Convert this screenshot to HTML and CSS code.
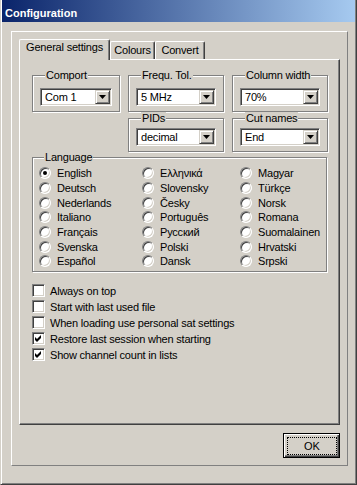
FILE: index.html
```html
<!DOCTYPE html>
<html lang="en">
<head>
    <meta charset="UTF-8">
    <meta name="viewport" content="width=device-width, initial-scale=1.0">
    <title>Configuration</title>
    <link rel="stylesheet" href="styles.css">
</head>
<body>
<div class="window">
    <div class="titlebar">Configuration</div>

    <div class="frame">
        <div class="tabs">
            <div class="tab active">General settings</div>
            <div class="tab tab-colours">Colours</div>
            <div class="tab tab-convert">Convert</div>
        </div>

        <div class="panel">
            <div class="top-groups">
                <div class="group">
                    <div class="group-label">Comport</div>
                    <div class="combo">
                        <span class="combo-text">Com 1</span>
                        <span class="combo-btn"><svg width="7" height="4" viewBox="0 0 7 4"><path d="M0 0h7L3.5 4z"/></svg></span>
                    </div>
                </div>
                <div class="group">
                    <div class="group-label">Frequ. Tol.</div>
                    <div class="combo">
                        <span class="combo-text">5 MHz</span>
                        <span class="combo-btn"><svg width="7" height="4" viewBox="0 0 7 4"><path d="M0 0h7L3.5 4z"/></svg></span>
                    </div>
                </div>
                <div class="group">
                    <div class="group-label">Column width</div>
                    <div class="combo">
                        <span class="combo-text">70%</span>
                        <span class="combo-btn"><svg width="7" height="4" viewBox="0 0 7 4"><path d="M0 0h7L3.5 4z"/></svg></span>
                    </div>
                </div>
                <div class="group small col-2">
                    <div class="group-label">PIDs</div>
                    <div class="combo">
                        <span class="combo-text">decimal</span>
                        <span class="combo-btn"><svg width="7" height="4" viewBox="0 0 7 4"><path d="M0 0h7L3.5 4z"/></svg></span>
                    </div>
                </div>
                <div class="group small">
                    <div class="group-label">Cut names</div>
                    <div class="combo">
                        <span class="combo-text">End</span>
                        <span class="combo-btn"><svg width="7" height="4" viewBox="0 0 7 4"><path d="M0 0h7L3.5 4z"/></svg></span>
                    </div>
                </div>
            </div>

            <div class="group language">
                <div class="group-label">Language</div>
                <div class="radios">
                    <div class="radio"><span class="dot checked"></span>English</div>
                    <div class="radio"><span class="dot"></span>Deutsch</div>
                    <div class="radio"><span class="dot"></span>Nederlands</div>
                    <div class="radio"><span class="dot"></span>Italiano</div>
                    <div class="radio"><span class="dot"></span>Français</div>
                    <div class="radio"><span class="dot"></span>Svenska</div>
                    <div class="radio"><span class="dot"></span>Español</div>
                    <div class="radio"><span class="dot"></span>Ελληνικά</div>
                    <div class="radio"><span class="dot"></span>Slovensky</div>
                    <div class="radio"><span class="dot"></span>Česky</div>
                    <div class="radio"><span class="dot"></span>Português</div>
                    <div class="radio"><span class="dot"></span>Русский</div>
                    <div class="radio"><span class="dot"></span>Polski</div>
                    <div class="radio"><span class="dot"></span>Dansk</div>
                    <div class="radio"><span class="dot"></span>Magyar</div>
                    <div class="radio"><span class="dot"></span>Türkçe</div>
                    <div class="radio"><span class="dot"></span>Norsk</div>
                    <div class="radio"><span class="dot"></span>Romana</div>
                    <div class="radio"><span class="dot"></span>Suomalainen</div>
                    <div class="radio"><span class="dot"></span>Hrvatski</div>
                    <div class="radio"><span class="dot"></span>Srpski</div>
                </div>
            </div>

            <div class="checks">
                <div class="check"><span class="box"></span>Always on top</div>
                <div class="check"><span class="box"></span>Start with last used file</div>
                <div class="check"><span class="box"></span>When loading use personal sat settings</div>
                <div class="check"><span class="box"><svg width="7" height="7" viewBox="0 0 7 7"><path d="M0 2L2 4L6 0V3L2 7L0 5Z"/></svg></span>Restore last session when starting</div>
                <div class="check"><span class="box"><svg width="7" height="7" viewBox="0 0 7 7"><path d="M0 2L2 4L6 0V3L2 7L0 5Z"/></svg></span>Show channel count in lists</div>
            </div>
        </div>

        <div class="actions">
            <button class="btn-ok"><span class="focus">OK</span></button>
        </div>
    </div>
</div>
</body>
</html>
```

FILE: styles.css
```css
body {
    margin: 0;
    background: #D4D0C8;
}

.window {
    width: 357px;
    height: 485px;
    box-sizing: border-box;
    display: flex;
    flex-direction: column;
    background: #D4D0C8;
    border-left: 1px solid #D4D0C8;
    border-right: 1px solid #404040;
    border-bottom: 1px solid #404040;
    box-shadow: inset 1px 0 #fff, inset -1px -1px #808080;
    font-family: "Liberation Sans", Arial, sans-serif;
    font-size: 11px;
    letter-spacing: -0.2px;
    color: #000;
}

.titlebar {
    height: 22px;
    box-sizing: border-box;
    margin: 0 1px;
    padding: 3px 0 0 3px;
    display: flex;
    align-items: center;
    background: linear-gradient(to right, #0A246A, #A6CAF0);
    color: #fff;
    font-weight: bold;
    letter-spacing: 0;
}

/* outer frame round the tab control */
.frame {
    height: 435px;
    box-sizing: border-box;
    margin: 9px 8px 0 10px;
    padding: 7px;
    display: flex;
    flex-direction: column;
    border-top: 1px solid #fff;
    border-left: 1px solid #fff;
    border-right: 1px solid #808080;
    border-bottom: 1px solid #808080;
}

.tabs {
    height: 21px;
    margin-bottom: -1px;
    display: flex;
    align-items: flex-end;
    position: relative;
    z-index: 1;
}

.tab {
    height: 18px;
    box-sizing: border-box;
    margin-bottom: 1px;
    padding-top: 2px;
    text-align: center;
    line-height: 13px;
    background: #D4D0C8;
    border-top: 1px solid #fff;
    border-left: 1px solid #fff;
    border-right: 1px solid #404040;
    border-radius: 2px 2px 0 0;
    box-shadow: inset -1px 0 #808080;
}

.tab.active {
    width: 91px;
    height: 21px;
    margin-bottom: 0;
    padding-top: 1px;
}

.tab-colours { width: 45px; }
.tab-convert { width: 50px; }

.panel {
    height: 366px;
    box-sizing: border-box;
    padding: 15px 12px 0;
    border-top: 1px solid #fff;
    border-left: 1px solid #fff;
    border-right: 1px solid #404040;
    border-bottom: 1px solid #404040;
    box-shadow: inset -1px -1px #808080;
}

.top-groups {
    display: grid;
    grid-template-columns: 88px 96px 96px;
    column-gap: 8px;
    row-gap: 6px;
}

.col-2 { grid-column: 2; }

/* etched group box */
.group {
    padding: 0 7px 5px;
    border: 1px solid #808080;
    box-shadow: inset 1px 1px #fff, 1px 1px #fff;
}

.group-label {
    width: fit-content;
    margin: -7px 0 0 5px;
    padding: 0 1px;
    line-height: 13px;
    background: #D4D0C8;
}

.combo {
    height: 18px;
    box-sizing: border-box;
    margin-top: 6px;
    display: flex;
    align-items: center;
    background: #fff;
    border: 1px solid;
    border-color: #808080 #fff #fff #808080;
    box-shadow: inset 1px 1px #404040, inset -1px -1px #D4D0C8;
    padding: 1px;
}

.group.small .combo { margin-top: 3px; }

.combo-text {
    flex: 1;
    padding-left: 3px;
}

.combo-btn {
    width: 15px;
    height: 14px;
    box-sizing: border-box;
    display: flex;
    align-items: center;
    justify-content: center;
    background: #D4D0C8;
    border: 1px solid;
    border-color: #D4D0C8 #404040 #404040 #D4D0C8;
    box-shadow: inset 1px 1px #fff, inset -1px -1px #808080;
}

.language {
    margin-top: 5px;
    padding: 0 0 2px 6px;
}

.radios {
    margin-top: 2px;
    display: grid;
    grid-auto-flow: column;
    grid-template-rows: repeat(7, 14.7px);
    grid-template-columns: 103px 98px 1fr;
}

.radio {
    display: flex;
    align-items: center;
    gap: 6px;
}

.dot {
    width: 12px;
    height: 12px;
    box-sizing: border-box;
    display: flex;
    align-items: center;
    justify-content: center;
    border-radius: 50%;
    background: #fff;
    border: 1px solid;
    border-color: #808080 #fff #fff #808080;
    box-shadow: inset 1px 1px #404040, inset -1px -1px #D4D0C8;
}

.dot.checked::after {
    content: "";
    width: 4px;
    height: 4px;
    border-radius: 50%;
    background: #000;
}

.checks {
    margin-top: 11px;
}

.check {
    height: 16px;
    display: flex;
    align-items: center;
    gap: 5px;
}

.box {
    width: 13px;
    height: 13px;
    box-sizing: border-box;
    display: flex;
    align-items: center;
    justify-content: center;
    background: #fff;
    border: 1px solid;
    border-color: #808080 #fff #fff #808080;
    box-shadow: inset 1px 1px #404040, inset -1px -1px #D4D0C8;
}

.actions {
    margin-top: 8px;
    display: flex;
    justify-content: flex-end;
}

.btn-ok {
    width: 57px;
    height: 25px;
    box-sizing: border-box;
    padding: 3px 2px 2px 3px;
    display: flex;
    background: #D4D0C8;
    border: 1px solid #000;
    box-shadow: inset 1px 1px #fff, inset -1px -1px #404040, inset -2px -2px #808080;
    font-family: "Liberation Sans", Arial, sans-serif;
    font-size: 11px;
    color: #000;
}

.btn-ok .focus {
    flex: 1;
    display: flex;
    align-items: center;
    justify-content: center;
    border: 1px dotted #000;
}
```
